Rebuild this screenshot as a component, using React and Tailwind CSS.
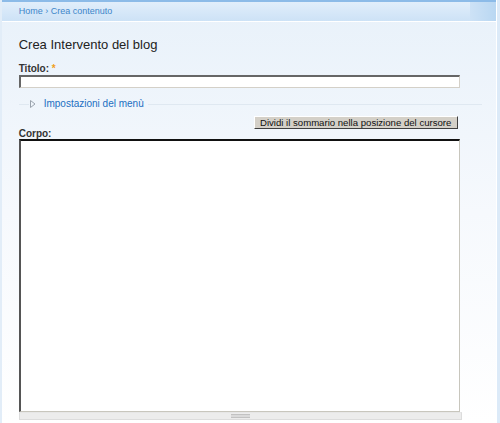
import React from "react";

export default function App() {
  return (
    <div
      className="relative w-[500px] h-[423px] overflow-hidden bg-gradient-to-b from-[#e8f1fa] via-[#f6f9fd] to-white"
      style={{ fontFamily: "'Liberation Sans', Arial, sans-serif" }}
    >
      <div className="flex h-full">
        <div className="w-[2px] bg-[#e2edf8]" />
        <div className="flex-1 flex flex-col">
          {/* header */}
          <div className="h-[22px] border-t-2 border-[#8cbbe8] border-b border-b-white bg-gradient-to-b from-[#e1eefb] to-[#cde2f6] flex items-center">
            <div className="pl-[17px] text-[9px] text-[#3d86c9] leading-none pb-[1px]">
              Home › Crea contenuto
            </div>
            <div className="ml-auto h-full w-[26px] bg-gradient-to-r from-[#cde2f6] to-[#b9d7f2]" />
          </div>
          {/* content */}
          <div className="pl-[17px] pr-[14px] pt-[15px] flex flex-col">
            <h1 className="text-[13px] leading-[16px] text-[#222]">Crea Intervento del blog</h1>
            <div className="mt-[10px] text-[10px] leading-[12px] font-bold text-[#333]">
              Titolo: <span className="text-[#f0a020]">*</span>
            </div>
            <div className="w-[441px] h-[13px] bg-white border-2 border-t-[#666] border-l-[#666] border-r-[#d4d0c8] border-b-[#d4d0c8] border-r border-b" />
            <div className="mt-[10px] flex items-center h-[12px] w-[463px]">
              <div className="w-[10px] h-px bg-[#dfe8f1]" />
              <svg width="6" height="8" viewBox="0 0 6 8" className="ml-[1px]">
                <path d="M0.5 0.5 L5 4 L0.5 7.5 Z" fill="none" stroke="#9aa3ad" strokeWidth="1" />
              </svg>
              <span className="ml-[8px] mr-[4px] text-[10px] text-[#1b6fc2] leading-none">Impostazioni del menù</span>
              <div className="flex-1 h-px bg-[#dfe8f1]" />
            </div>
            <div className="mt-[6px] w-[441px] flex justify-end">
              <button
                className="mr-[2px] h-[13px] w-[204px] bg-[#d4d0c8] border border-t-white border-l-white border-r-[#404040] border-b-[#404040] text-[9.6px] leading-none text-[#111] whitespace-nowrap"
              >
                Dividi il sommario nella posizione del cursore
              </button>
            </div>
            <div className="text-[10px] leading-[10px] font-bold text-[#333]">Corpo:</div>
            <div className="w-[441px] h-[273px] bg-white border-2 border-t-[#111] border-l-[#555] border-r border-b border-r-[#c8c6bd] border-b-[#c8c6bd]" />
            <div className="w-[443px] h-[8px] bg-[#ececec] border border-[#dcdcdc] border-t-[#e6e6e6] flex items-center justify-center">
              <div className="w-[19px] h-[4px] border-y border-[#c2c2c2] bg-[#dadada]" />
            </div>
          </div>
        </div>
        <div className="w-[5px] border-l border-white bg-[#dceaf8]" />
      </div>
    </div>
  );
}
